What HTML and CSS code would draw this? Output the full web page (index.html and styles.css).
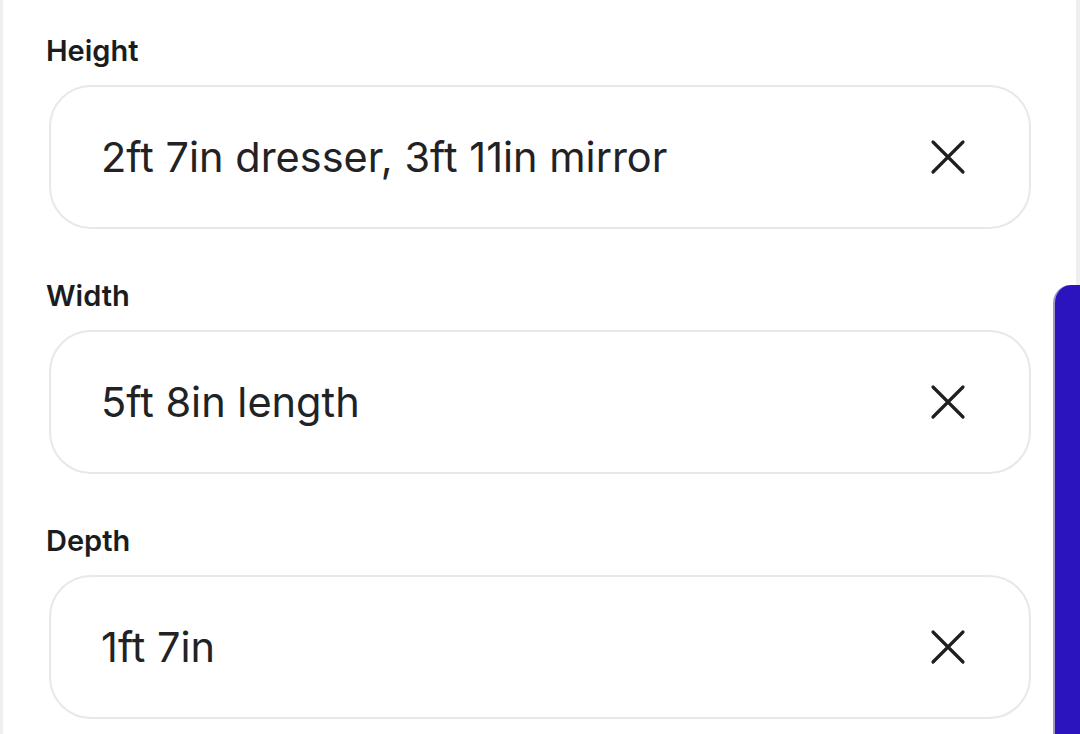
FILE: index.html
```html
<!DOCTYPE html>
<html lang="en">
<head>
  <meta charset="UTF-8">
  <meta name="viewport" content="width=device-width, initial-scale=1.0">
  <title>Dimensions</title>
  <link rel="stylesheet" href="styles.css">
</head>
<body>
  <div class="page">
    <!-- Dimension fields -->
    <div class="fields">
      <div class="field">
        <div class="field-label">Height</div>
        <div class="field-box">
          <span class="field-value">2ft 7in dresser, 3ft 11in mirror</span>
          <svg class="clear" viewBox="0 0 40 40" width="40" height="40">
            <path d="M5 5 L35 35 M35 5 L5 35"/>
          </svg>
        </div>
      </div>
      <div class="field">
        <div class="field-label">Width</div>
        <div class="field-box">
          <span class="field-value">5ft 8in length</span>
          <svg class="clear" viewBox="0 0 40 40" width="40" height="40">
            <path d="M5 5 L35 35 M35 5 L5 35"/>
          </svg>
        </div>
      </div>
      <div class="field">
        <div class="field-label">Depth</div>
        <div class="field-box">
          <span class="field-value">1ft 7in</span>
          <svg class="clear" viewBox="0 0 40 40" width="40" height="40">
            <path d="M5 5 L35 35 M35 5 L5 35"/>
          </svg>
        </div>
      </div>
    </div>
  </div>

  <!-- Side handle -->
  <div class="side-handle"></div>
</body>
</html>
```

FILE: styles.css
```css
body {
  margin: 0;
  font-family: Inter, "Noto Sans", sans-serif;
  background: #fff;
  color: #1d1d1f;
  overflow: hidden;
}
.page {
  min-height: 100vh;
  border-left: 3px solid #efefef;
  border-right: 4px solid #efefef;
  box-sizing: border-box;
}
.fields {
  padding: 33px 45px 0 43px;
}
.field {
  margin-bottom: 49px;
}
.field-label {
  font-size: 29px;
  line-height: 36px;
  font-weight: 600;
  color: #1c1c1e;
  margin-bottom: 16px;
}
.field-box {
  margin-left: 3px;
  height: 144px;
  box-sizing: border-box;
  border: 2px solid #e8e8e8;
  border-radius: 42px;
  display: flex;
  align-items: center;
  justify-content: space-between;
  padding: 0 61px 0 50px;
}
.field-value {
  font-size: 41.5px;
  font-weight: 400;
  color: #222224;
}
.clear {
  fill: none;
  stroke: #1f1f1f;
  stroke-width: 3.2;
  stroke-linecap: round;
}
.side-handle {
  position: absolute;
  top: 285px;
  right: 0;
  bottom: 0;
  width: 25px;
  background: #2b14bd;
  border-left: 2px solid #9c98c4;
  border-top-left-radius: 18px;
}
```
